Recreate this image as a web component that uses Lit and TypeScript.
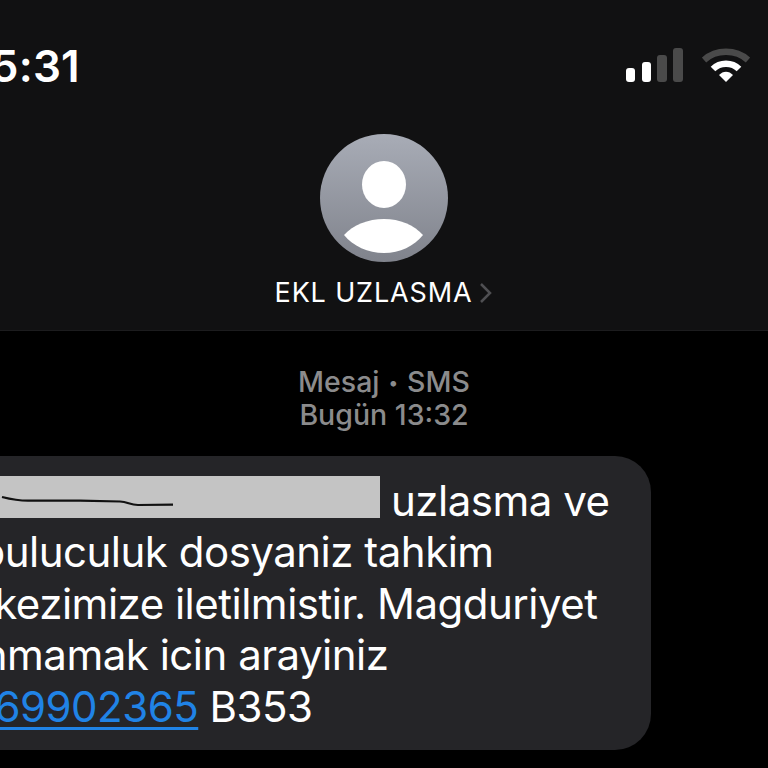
import { LitElement, html, css } from "lit";
import { customElement } from "lit/decorators.js";

@customElement("app-root")
export class AppRoot extends LitElement {
  static styles = css`
    :host { display: block; width: 768px; height: 768px; overflow: hidden; background: #000; font-family: Inter, "Liberation Sans", sans-serif; color: #fff; }
    .header { height: 331px; box-sizing: border-box; background: #111112; border-bottom: 1px solid #1c1c1e; display: flex; flex-direction: column; align-items: center; }
    .status { align-self: stretch; height: 134px; display: flex; justify-content: space-between; align-items: flex-start; padding: 0 18px 0 0; box-sizing: border-box; }
    .time { font-size: 44px; font-weight: 600; line-height: 54px; margin: 39px 0 0 -28px; letter-spacing: 0.2px; }
    .icons { display: flex; gap: 19px; margin-top: 48px; align-items: flex-start; }
    .icons svg { display: block; }
    .avatar { display: block; width: 128px; height: 128px; }
    .name { display: flex; align-items: center; gap: 7px; margin-top: 14px; font-size: 27px; line-height: 34px; letter-spacing: 0.85px; margin-left: -1px; }
    .meta { margin-top: 34px; text-align: center; color: #8b8b8c; font-size: 28.500px; line-height: 33px; font-weight: 500; }
    .meta div { height: 33px; }
    .dot { font-size: 18px; padding: 0 9px; line-height: 1; vertical-align: 3px; }
    .bubble { margin: 25px 0 0 -110px; width: 761px; height: 294px; box-sizing: border-box; background: #252528; border-radius: 36px; padding: 19px 0 0 28px; font-size: 42px; line-height: 51px; letter-spacing: -0.5px; white-space: nowrap; }
    .line { height: 51.400px; }
    .tight { margin-left: -26px; }
    .redact { display: inline-block; vertical-align: top; width: 462px; height: 42px; margin-top: 1px; background: #c4c4c4; margin-right: 11px; }
    .redact svg { display: block; }
    .link { color: #2083e6; text-decoration: underline; text-underline-offset: 5px; text-decoration-thickness: 3px; }
  `;

  render() {
    return html`
      <div class="header">
        <div class="status">
          <div class="time">15:31</div>
          <div class="icons">
            <svg width="57" height="34" viewBox="0 0 57 34">
              <rect x="0" y="20" width="9" height="14" rx="3" fill="#fff"/>
              <rect x="16" y="14" width="9" height="20" rx="3" fill="#fff"/>
              <rect x="31" y="7" width="10" height="27" rx="3" fill="#4a4a4a"/>
              <rect x="47" y="0" width="10" height="34" rx="3" fill="#4a4a4a"/>
            </svg>
            <svg width="48" height="34" viewBox="0 0 48 34" fill="none">
              <path d="M2 12 C14 1 34 1 46 12" stroke="#4a4a4a" stroke-width="6.5"/>
              <path d="M11 21 C18 14 30 14 37 21" stroke="#fff" stroke-width="6.5"/>
              <path d="M17 27 C21 22.500 27 22.500 31 27 L24 34 Z" fill="#fff"/>
            </svg>
          </div>
        </div>
        <svg class="avatar" viewBox="0 0 128 128">
          <defs><linearGradient id="g" x1="0" y1="0" x2="0" y2="1"><stop offset="0" stop-color="#a8acb6"/><stop offset="1" stop-color="#80838c"/></linearGradient></defs>
          <circle cx="64" cy="64" r="64" fill="url(#g)"/>
          <ellipse cx="64" cy="50.500" rx="22" ry="23.500" fill="#fff"/>
          <path d="M24 101 C33 91 48 85 64 85 C80 85 94 91 103 101 C94 112 80 119 64 119 C48 119 33 112 24 101 Z" fill="#fff"/>
        </svg>
        <div class="name">EKL UZLASMA
          <svg width="13" height="22" viewBox="0 0 13 22" fill="none"><path d="M2 2 L11 11 L2 20" stroke="#4f4f52" stroke-width="2.500"/></svg>
        </div>
      </div>
      <div class="meta"><div>Mesaj<span class="dot">•</span>SMS</div><div>Bugün 13:32</div></div>
      <div class="bubble">
        <div class="line"><span class="redact"><svg width="462" height="42" viewBox="0 0 462 42" fill="none"><path d="M84 21 C92 23 100 24.700 110 24.700 L162 24.700 L202 25.500 C210 26 212 29 220 29 L255 28.700" stroke="#111" stroke-width="2.200"/></svg></span>uzlasma ve</div>
        <div class="line">arabuluculuk dosyaniz tahkim</div>
        <div class="line">merkezimize iletilmistir. Magduriyet</div>
        <div class="line tight">yasanmamak icin arayiniz</div>
        <div class="line"><span class="link">05369902365</span> B353</div>
      </div>
    `;
  }
}
